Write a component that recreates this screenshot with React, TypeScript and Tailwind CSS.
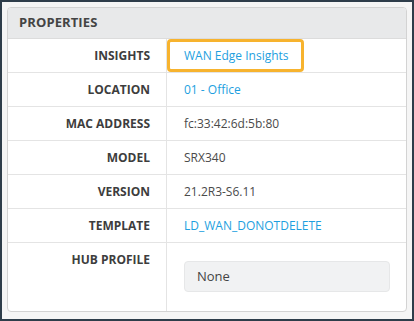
const rows: { label: string; value: string; link?: boolean; highlight?: boolean }[] = [
  { label: "Insights", value: "WAN Edge Insights", link: true, highlight: true },
  { label: "Location", value: "01 - Office", link: true },
  { label: "MAC Address", value: "fc:33:42:6d:5b:80" },
  { label: "Model", value: "SRX340" },
  { label: "Version", value: "21.2R3-S6.11" },
  { label: "Template", value: "LD_WAN_DONOTDELETE", link: true },
];

export default function App() {
  return (
    <div
      className="w-[414px] h-[321px] bg-[#2e3d4a] p-[2px]"
      style={{ fontFamily: '"Open Sans", "Noto Sans", sans-serif' }}
    >
      <div className="h-full bg-[#f5f5f5] pt-[5px] px-[5px]">
        <div className="h-[305px] bg-white border border-[#d3d3d3] rounded-[4px] overflow-hidden flex flex-col">
          <div className="h-[31px] bg-[#e8e9ea] border-b border-[#dcdcdc] flex items-center px-[11px]">
            <span className="text-[13px] font-bold text-[#444] tracking-[0.1px]">PROPERTIES</span>
          </div>
          {rows.map((r) => (
            <div key={r.label} className="flex h-[34px] border-b border-[#e4e4e4]">
              <div className="w-[159px] shrink-0 border-r border-[#e4e4e4] flex items-center justify-end pr-[16px]">
                <span className="text-[12px] font-bold text-[#3d3d3d] uppercase">{r.label}</span>
              </div>
              <div className="flex-1 flex items-center">
                {r.highlight ? (
                  <div className="h-[33px] border-[3px] border-[#f7b32e] rounded-[4px] flex items-center pl-[14px] pr-[12px]">
                    <span className="text-[12px] text-[#1e9fe0]">{r.value}</span>
                  </div>
                ) : (
                  <span className={`pl-[17px] text-[12px] ${r.link ? "text-[#1e9fe0]" : "text-[#4a4a4a]"}`}>
                    {r.value}
                  </span>
                )}
              </div>
            </div>
          ))}
          <div className="flex flex-1">
            <div className="w-[159px] shrink-0 border-r border-[#e4e4e4] flex justify-end pr-[16px] pt-[8px]">
              <span className="text-[12px] font-bold text-[#3d3d3d] uppercase">Hub Profile</span>
            </div>
            <div className="flex-1 pl-[17px] pr-[16px] pt-[18px]">
              <div className="h-[31px] bg-[#f1f2f3] border border-[#e6e7e8] rounded-[4px] flex items-center px-[12px]">
                <span className="text-[13px] text-[#444]">None</span>
              </div>
            </div>
          </div>
        </div>
      </div>
    </div>
  );
}
